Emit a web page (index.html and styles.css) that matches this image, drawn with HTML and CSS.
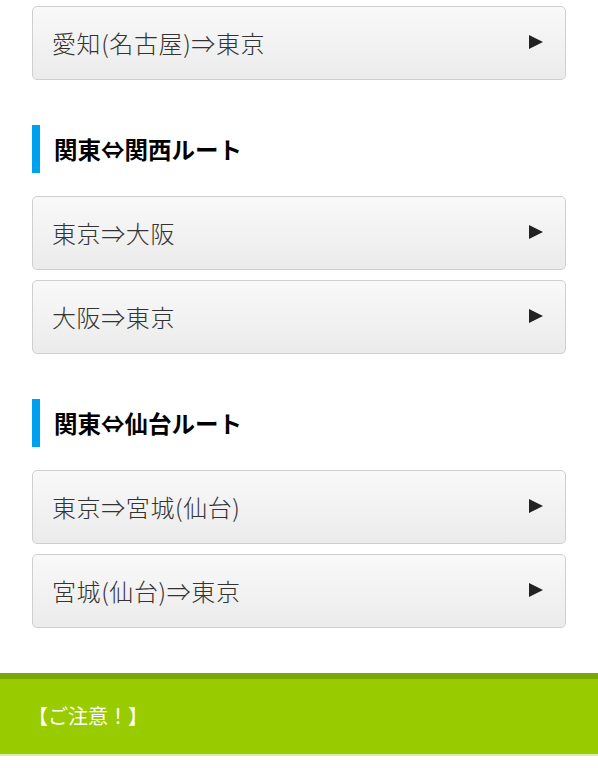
FILE: index.html
```html
<!DOCTYPE html>
<html lang="ja">
<head>
    <meta charset="UTF-8">
    <meta name="viewport" content="width=device-width, initial-scale=1.0">
    <title>高速バス ルート一覧</title>
    <link rel="stylesheet" href="styles.css">
</head>
<body>

<div class="routes">
    <!-- 中部 -->
    <ul class="route-list">
        <li><a href="#" class="route-btn">愛知(名古屋)⇒東京</a></li>
    </ul>

    <!-- 関東⇔関西 -->
    <h2 class="route-title">関東⇔関西ルート</h2>
    <ul class="route-list">
        <li><a href="#" class="route-btn">東京⇒大阪</a></li>
        <li><a href="#" class="route-btn">大阪⇒東京</a></li>
    </ul>

    <!-- 関東⇔仙台 -->
    <h2 class="route-title">関東⇔仙台ルート</h2>
    <ul class="route-list">
        <li><a href="#" class="route-btn">東京⇒宮城(仙台)</a></li>
        <li><a href="#" class="route-btn">宮城(仙台)⇒東京</a></li>
    </ul>
</div>

<div class="notice">
    <p>【ご注意！】</p>
</div>

</body>
</html>
```

FILE: styles.css
```css
body {
    margin: 0;
    padding: 0;
    font-family: "Noto Sans CJK JP", "Noto Sans", sans-serif;
    background-color: #fff;
    color: #333;
}
.routes {
    padding: 6px 32px 45px;
}
.route-list {
    list-style: none;
    margin: 0;
    padding: 0;
    display: flex;
    flex-direction: column;
    gap: 10px;
}
.route-btn {
    display: flex;
    align-items: center;
    justify-content: space-between;
    height: 72px;
    padding: 0 22px 2px 19px;
    border: 1px solid #cfcfcf;
    border-radius: 5px;
    background: linear-gradient(#f9f9f9, #ebebeb);
    color: #333;
    font-size: 24px;
    font-weight: 300;
    letter-spacing: 0.6px;
    text-decoration: none;
    box-sizing: border-box;
    height: 74px;
}
.route-btn::after {
    content: "";
    border-style: solid;
    border-width: 7.5px 0 7.5px 14px;
    border-color: transparent transparent transparent #222;
}
.route-title {
    margin: 45px 0 23px;
    padding-left: 14px;
    border-left: 8px solid #00a0f0;
    height: 48px;
    display: flex;
    align-items: center;
    font-size: 23.5px;
    font-weight: bold;
    color: #000;
}
.notice {
    background-color: #99cc00;
    border-top: 6px solid #7aa800;
    border-bottom: 2px solid #d9ecaa;
    padding: 21px 28px 22px;
    color: #fff;
}
.notice p {
    margin: 0;
    font-size: 20px;
    line-height: 32px;
}
```
